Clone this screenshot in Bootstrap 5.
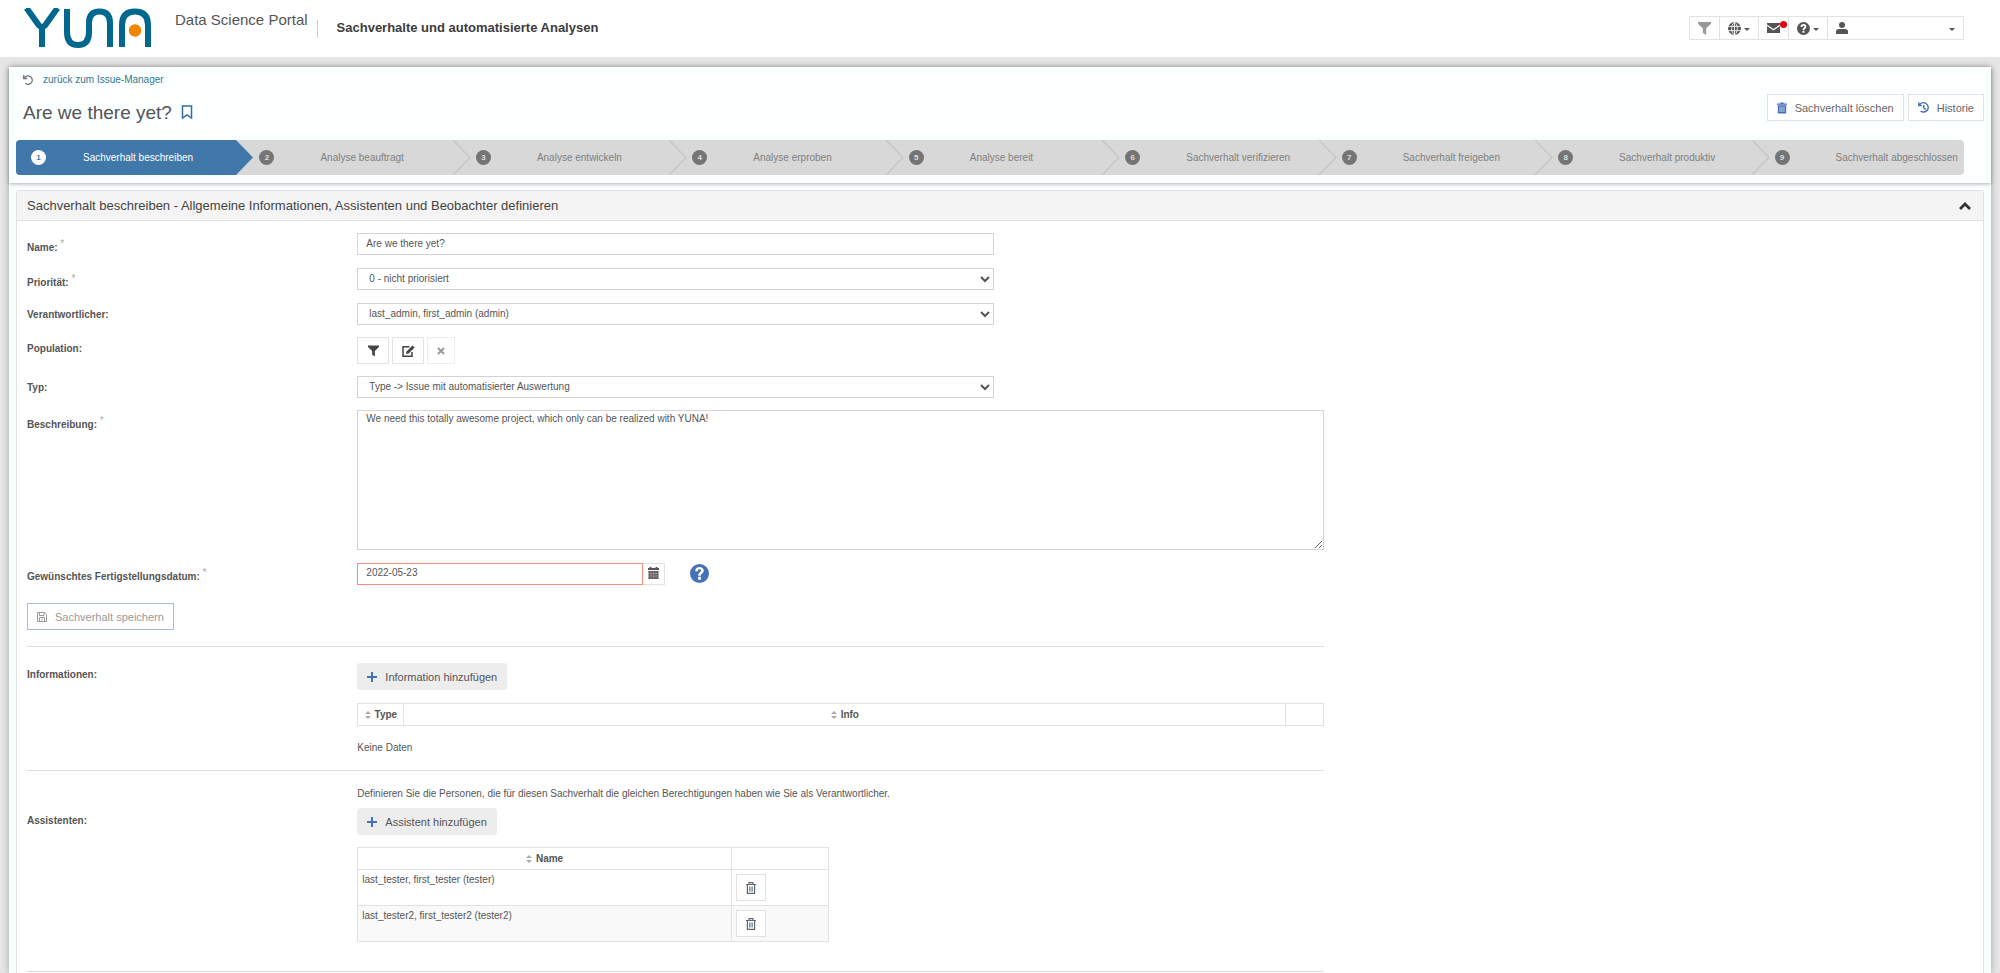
<!DOCTYPE html>
<html lang="de">
<head>
<meta charset="utf-8">
<meta name="viewport" content="width=device-width, initial-scale=1">
<title>YUNA – Sachverhalte und automatisierte Analysen</title>
<link href="https://cdn.jsdelivr.net/npm/bootstrap@5.3.0/dist/css/bootstrap.min.css" rel="stylesheet">
<style>
body { font-family: "Liberation Sans", Arial, sans-serif; font-size: 10px; line-height: 16px; color: #555; background: #e6e6e6; }
button, input, select, textarea { font-family: inherit; }
svg { display: block; flex: none; }
.ico { fill: currentColor; }
.blue { color: #4671b8; }

/* top bar */
.topbar { height: 57px; background: #fff; padding: 8px 36px 0 24px; }
.brand-sub { font-size: 15px; line-height: 24px; margin: 0 0 0 24px; }
.topbar .divider { width: 1px; height: 18px; background: #ccc; margin: 12px 0 0 9px; }
.page-name { font-size: 13px; line-height: 20px; font-weight: 700; color: #3c3c3c; margin: 10px 0 0 19px; }
.tools { margin-top: 8px; }
.tools .btn { height: 24px; border: 1px solid #e2e2e2; border-radius: 0; padding: 0 8px; color: #555; display: flex; align-items: center; gap: 3px; background: #fff; position: relative; }
.tools .btn + .btn { margin-left: -1px; }
.tools .btn.idle { color: #999; }
.tools .account { width: 137px; }
.caret { border: 3px solid transparent; border-top-color: currentColor; border-bottom: 0; width: 0; margin-top: 3px; }
.dot { position: absolute; top: 4px; right: 1px; width: 7px; height: 7px; border-radius: 50%; background: #e2000f; }

/* issue head */
.shell { margin: 10px 9px 0; background: #fbffff; box-shadow: 0 0 7px rgba(0,0,0,.3); }
.headpart { padding: 5px 7px 8px; box-shadow: 0 1px 4px rgba(0,0,0,.3); }
.backlink { color: #34788f; text-decoration: none; padding-left: 7px; gap: 10px; }
.titlebar { padding: 4px 0 0 7px; }
.issue-title { font-size: 19px; line-height: 24px; font-weight: 400; margin: 7px 0 0; color: #555; }
.bookmark { margin: 11px 0 0 9px; }
.btn-line, .btn-flat { font-size: 11px; line-height: 16px; height: 27px; padding: 0 9px; border: 1px solid #e2e2e2; border-radius: 0; background: #fff; color: #666; display: inline-flex; align-items: center; gap: 8px; white-space: nowrap; }
.btn-flat { background: #ededed; border-color: #ededed; border-radius: 3px; color: #555; }
.steps { list-style: none; margin: 15px 20px 0 0; padding: 0; display: grid; grid-template-columns: repeat(9, 1fr); height: 35px; background: #d8d8d8; border-radius: 4px; overflow: hidden; color: #808080; }
.steps li { position: relative; display: flex; align-items: center; padding-left: 27px; white-space: nowrap; }
.steps .num { width: 15px; height: 15px; border-radius: 50%; background: #757575; color: #ddd; font-size: 8px; line-height: 15px; font-weight: 700; text-align: center; margin-right: 46px; }
.steps li:first-child { padding-left: 15px; background: #4078aa; color: #fff; }
.steps li:first-child .num { background: #fff; color: #4078aa; margin-right: 37px; }
.steps svg { position: absolute; left: 100%; top: 0; z-index: 1; }

/* panel and form */
.panel { margin: 7px 7px 0; border: 1px solid #e2e2e2; border-bottom: 0; border-radius: 3px 3px 0 0; background: #fff; }
.panel-top { height: 30px; background: #f4f4f4; border-bottom: 1px solid #e2e2e2; padding: 0 12px 0 10px; }
.panel-top h2 { font-size: 13px; font-weight: 400; margin: 0; color: #444; }
.panel-top button { color: #333; }
.panel-main { padding: 12px 10px 0; }
form > .row { margin-bottom: 12px; }
.field-label { font-weight: 700; padding-top: 4px; }
.field-label.req { padding-top: 7px; }
.req sup { font-size: 10px; font-weight: 400; color: #aaa; top: -4px; line-height: 0; }
.field { padding-left: 6px; }
.box { display: block; height: 22px; border: 1px solid #d4d4d4; border-radius: 0; background: #fff; color: #555; font-size: 10px; line-height: 16px; padding: 0 8px 2px; }
.half { width: calc(66.6667% - 8px); }
select.box { padding-left: 7px; padding-right: 0; }
textarea.box { height: 140px; width: 100%; padding: 0 8px; }
.datebox { width: calc(33.3333% - 15px); margin-right: 25px; }
.datebox .box { flex: 1; border-color: #f58b78; min-width: 0; }
.datebox button { width: 22px; height: 22px; border: 1px solid #e2e2e2; border-left: 0; background: #fff; padding: 3px 0 0; display: flex; justify-content: center; color: #555; }
.tool-row { gap: 3px; }
.sq { height: 27px; border: 1px solid #e2e2e2; background: #fff; padding: 0; width: 32px; display: flex; align-items: center; justify-content: center; color: #444; }
.sq.off { width: 28px; color: #999; border-color: #ededed; }
.btn-save { display: flex; margin: 18px 0 16px; border-color: #a9bcdf; color: #999; }
.rule { border: 0; border-top: 1px solid #dcdcdc; opacity: 1; margin: 0; }

/* tables */
.grid-table { border-collapse: collapse; color: #555; }
.grid-table th, .grid-table td { border: 1px solid #e2e2e2; }
.grid-table th { height: 22px; text-align: center; padding: 0 4px; white-space: nowrap; }
.grid-table td { height: 36px; vertical-align: top; padding: 2px 4px; }
.grid-table tbody tr:nth-child(2) td { background: #f9f9f9; }
.grid-table td .sq { margin-top: 2px; color: #666; width: 30px; }
.sorter { display: inline-block; vertical-align: -1px; margin-right: 4px; color: #aaa; }
.block-info { padding-top: 16px; }
.block-info .grid-table { margin-top: 13px; }
.c-type { width: 46px; }
.c-tail { width: 38px; }
.no-data { margin: 14px 0 2px; }
.block-people { padding-top: 15px; }
.block-people .field-label { padding-top: 27px; }
.intro { margin: 0 0 6px; }
.people { width: calc(50% - 12px); margin: 12px 0 17px; }
.c-act { width: 97px; }
</style>
</head>
<body class="d-flex flex-column min-vh-100">
<svg class="d-none">
  <symbol id="i-filter" viewBox="0 0 12 12"><path d="M0 0H12V1.500L7.500 6V12L4.500 10V6L0 1.500Z"/></symbol>
  <symbol id="i-help" viewBox="0 0 20 20"><path fill-rule="evenodd" d="M10 0A10 10 0 1 1 10 20A10 10 0 0 1 10 0ZM8.500 13.500V16.500H11.500V13.500ZM5.500 7.500H8.300C8.300 6 9 5.600 10 5.600C11 5.600 11.600 6.200 11.600 7C11.600 8.600 8.600 8.700 8.600 12.300H11.300C11.300 10.300 14.500 9.800 14.500 6.900C14.500 4.600 12.500 3.200 10 3.200C7.300 3.200 5.500 4.700 5.500 7.500Z"/></symbol>
  <symbol id="i-trash" viewBox="0 0 12 13"><path d="M4 0H8V1.200H12V2.600H0V1.200H4Z"/><path fill-rule="evenodd" d="M1 3.200H11V13H1ZM3.200 4.800V11.200H4V4.800ZM5.600 4.800V11.200H6.400V4.800ZM8 4.800V11.200H8.800V4.800Z"/></symbol>
  <symbol id="i-bin" viewBox="0 0 10 12"><path fill="none" stroke="currentColor" stroke-width="1.200" d="M0 2.500H10M3 2.500V.7H7V2.500M1.400 2.500V11.300H8.600V2.500"/><path stroke="#5b7f9f" stroke-width=".9" d="M3.600 4.500V9.500M5 4.500V9.500M6.400 4.500V9.500"/></symbol>
  <symbol id="i-plus" viewBox="0 0 10 10"><path d="M4 0H6V4H10V6H6V10H4V6H0V4H4Z"/></symbol>
  <symbol id="i-sort" viewBox="0 0 6 8"><path d="M3 0 6 3H0ZM3 8 0 5H6Z"/></symbol>
  <symbol id="i-chev" viewBox="0 0 22 35"><path d="M4 0 21 17.500 4 35" fill="none" stroke="#c4c4c4" stroke-width="1.200"/></symbol>
</svg>

<header class="topbar d-flex align-items-start">
  <a href="#" aria-label="YUNA"><svg width="127" height="40" viewBox="0 0 127 40" fill="none" stroke="#00678f" stroke-width="6"><path d="M2.500 0 15 17.500Q18 20.500 21 17.500L33.500 0M18 19V39M43 1V24Q43 37 54 37T65 24V15Q65 3.500 75.500 3.500T86 15V39M98 39V17Q98 3.500 111 3.500T124 17V39"/><circle cx="111" cy="22.500" r="6.200" fill="#f28500" stroke="none"/></svg></a>
  <div class="brand-sub text-nowrap">Data Science Portal</div>
  <span class="divider"></span>
  <h1 class="page-name text-nowrap">Sachverhalte und automatisierte Analysen</h1>
  <div class="tools d-flex ms-auto">
    <button class="btn idle" type="button" aria-label="Filter"><svg class="ico" width="13" height="13"><use href="#i-filter"/></svg></button>
    <button class="btn" type="button" aria-label="Sprache"><svg width="13" height="13" viewBox="0 0 12 12"><circle cx="6" cy="6" r="6" fill="#555"/><path d="M0 4H12M0 8H12M6 0V12M6 0C2.500 3 2.500 9 6 12C9.500 9 9.500 3 6 0" fill="none" stroke="#fff" stroke-width=".8"/></svg><span class="caret"></span></button>
    <button class="btn" type="button" aria-label="Nachrichten"><svg class="ico" width="13" height="10" viewBox="0 0 13 10"><path d="M0 0H13V1.500L6.500 6 0 1.500ZM0 3 6.500 7.400 13 3V10H0Z"/></svg><span class="dot"></span></button>
    <button class="btn" type="button" aria-label="Hilfe"><svg class="ico" width="13" height="13"><use href="#i-help"/></svg><span class="caret"></span></button>
    <button class="btn account" type="button" aria-label="Benutzer"><svg class="ico me-auto" width="12" height="12" viewBox="0 0 12 12"><circle cx="6" cy="3" r="3"/><path d="M0 12V9.500Q0 7 3 7H9Q12 7 12 9.500V12Z"/></svg><span class="caret"></span></button>
  </div>
</header>

<main class="shell flex-grow-1 d-flex flex-column">
  <section class="headpart">
    <a href="#" class="backlink d-inline-flex align-items-center"><svg width="10" height="10" viewBox="0 0 10 10" fill="none" stroke="#777" stroke-width="1.300"><path d="M.7 0V3.500H4.200M.9 3.300C2 1 5 .4 7 1.400C9.500 2.700 9.900 5.800 8.300 7.700C6.800 9.400 4.200 9.700 2.300 8.300"/></svg>zurück zum Issue-Manager</a>
    <div class="titlebar d-flex align-items-start">
      <h2 class="issue-title text-nowrap">Are we there yet?</h2>
      <svg class="bookmark" width="12" height="14" viewBox="0 0 12 14" fill="none" stroke="#34709b" stroke-width="1.500"><path d="M1.500 1H10.500V13L6 9.800 1.500 13Z"/></svg>
      <div class="d-flex ms-auto gap-1">
        <button class="btn-line" type="button"><svg class="ico blue" width="10" height="12"><use href="#i-trash"/></svg>Sachverhalt löschen</button>
        <button class="btn-line" type="button"><svg class="blue" width="11" height="11" viewBox="0 0 11 11" fill="none" stroke="currentColor" stroke-width="1.400"><path d="M.8 .5V3.500H3.800M1.200 3.300C2.500 .9 5.400 .2 7.700 1.300C10.200 2.600 10.900 5.700 9.400 8C7.900 10.200 4.800 10.700 2.600 9.200M5.800 3V6L7.800 7.300"/></svg>Historie</button>
      </div>
    </div>
    <ol class="steps">
      <li><span class="num">1</span>Sachverhalt beschreiben<svg width="22" height="35" viewBox="0 0 22 35"><path d="M-1 0H4L21 17.500 4 35H-1Z" fill="#4078aa"/></svg></li>
      <li><span class="num">2</span>Analyse beauftragt<svg width="22" height="35"><use href="#i-chev"/></svg></li>
      <li><span class="num">3</span>Analyse entwickeln<svg width="22" height="35"><use href="#i-chev"/></svg></li>
      <li><span class="num">4</span>Analyse erproben<svg width="22" height="35"><use href="#i-chev"/></svg></li>
      <li><span class="num">5</span>Analyse bereit<svg width="22" height="35"><use href="#i-chev"/></svg></li>
      <li><span class="num">6</span>Sachverhalt verifizieren<svg width="22" height="35"><use href="#i-chev"/></svg></li>
      <li><span class="num">7</span>Sachverhalt freigeben<svg width="22" height="35"><use href="#i-chev"/></svg></li>
      <li><span class="num">8</span>Sachverhalt produktiv<svg width="22" height="35"><use href="#i-chev"/></svg></li>
      <li><span class="num">9</span>Sachverhalt abgeschlossen</li>
    </ol>
  </section>

  <section class="panel flex-grow-1">
    <div class="panel-top d-flex align-items-center justify-content-between">
      <h2>Sachverhalt beschreiben - Allgemeine Informationen, Assistenten und Beobachter definieren</h2>
      <button type="button" class="border-0 bg-transparent p-0" aria-label="Einklappen"><svg width="12" height="8" viewBox="0 0 12 8" fill="none" stroke="currentColor" stroke-width="2.800"><path d="M1 7 6 2 11 7"/></svg></button>
    </div>
    <div class="panel-main">
      <form class="col-8">
        <div class="row g-0">
          <label class="col-3 field-label req" for="f-name">Name: <sup>*</sup></label>
          <div class="col-9 field"><input id="f-name" class="box half" type="text" value="Are we there yet?"></div>
        </div>
        <div class="row g-0">
          <label class="col-3 field-label req" for="f-prio">Priorität: <sup>*</sup></label>
          <div class="col-9 field"><select id="f-prio" class="box half"><option>0 - nicht priorisiert</option></select></div>
        </div>
        <div class="row g-0">
          <label class="col-3 field-label" for="f-resp">Verantwortlicher:</label>
          <div class="col-9 field"><select id="f-resp" class="box half"><option>last_admin, first_admin (admin)</option></select></div>
        </div>
        <div class="row g-0">
          <span class="col-3 field-label">Population:</span>
          <div class="col-9 field d-flex tool-row">
            <button class="sq" type="button" aria-label="Filtern"><svg class="ico" width="11" height="12"><use href="#i-filter"/></svg></button>
            <button class="sq" type="button" aria-label="Bearbeiten"><svg width="13" height="12" viewBox="0 0 13 12" fill="none" stroke="currentColor" stroke-width="1.500"><path d="M7.500 1.800H1V11.200H10V7"/><path d="M4 9 4.500 6.400 10.500 .4 12.600 2.500 6.600 8.500Z" fill="currentColor" stroke="none"/></svg></button>
            <button class="sq off" type="button" aria-label="Entfernen" disabled><svg width="8" height="8" viewBox="0 0 8 8" stroke="currentColor" stroke-width="2"><path d="M1 1 7 7M7 1 1 7"/></svg></button>
          </div>
        </div>
        <div class="row g-0">
          <label class="col-3 field-label" for="f-type">Typ:</label>
          <div class="col-9 field"><select id="f-type" class="box half"><option>Type -&gt; Issue mit automatisierter Auswertung</option></select></div>
        </div>
        <div class="row g-0">
          <label class="col-3 field-label req" for="f-desc">Beschreibung: <sup>*</sup></label>
          <div class="col-9 field"><textarea id="f-desc" class="box">We need this totally awesome project, which only can be realized with YUNA!</textarea></div>
        </div>
        <div class="row g-0">
          <label class="col-3 field-label req" for="f-date">Gewünschtes Fertigstellungsdatum: <sup>*</sup></label>
          <div class="col-9 field d-flex align-items-center">
            <div class="datebox d-flex"><input id="f-date" class="box" type="text" value="2022-05-23"><button type="button" aria-label="Kalender"><svg class="ico" width="11" height="12" viewBox="0 0 11 12"><path d="M1.500 0H3.500V1H7.500V0H9.500V1H11V3H0V1H1.500Z"/><path d="M.5 4H10.500V12H.5Z"/><path d="M.5 6.500H10.500M.5 9H10.500M3 4V12M5.500 4V12M8 4V12" stroke="#fff" stroke-width=".3"/></svg></button></div>
            <svg class="ico blue" width="19" height="19"><use href="#i-help"/></svg>
          </div>
        </div>
        <button class="btn-line btn-save" type="button" disabled><svg width="10" height="10" viewBox="0 0 10 10" fill="none" stroke="currentColor"><path d="M.5 .5H7.500L9.500 2.500V9.500H.5ZM2.500 .5V3.500H7V.5M2.500 9.500V5.500H7.500V9.500M5 6.500V8.500"/></svg>Sachverhalt speichern</button>

        <hr class="rule">
        <div class="row g-0 block-info">
          <span class="col-3 field-label">Informationen:</span>
          <div class="col-9 field">
            <button class="btn-flat" type="button"><svg class="ico blue" width="10" height="10"><use href="#i-plus"/></svg>Information hinzufügen</button>
            <table class="grid-table w-100">
              <thead><tr><th class="c-type"><svg class="ico sorter" width="6" height="8"><use href="#i-sort"/></svg>Type</th><th><svg class="ico sorter" width="6" height="8"><use href="#i-sort"/></svg>Info</th><th class="c-tail"></th></tr></thead>
            </table>
            <p class="no-data">Keine Daten</p>
          </div>
        </div>

        <hr class="rule">
        <div class="row g-0 block-people">
          <span class="col-3 field-label">Assistenten:</span>
          <div class="col-9 field">
            <p class="intro">Definieren Sie die Personen, die für diesen Sachverhalt die gleichen Berechtigungen haben wie Sie als Verantwortlicher.</p>
            <button class="btn-flat" type="button"><svg class="ico blue" width="10" height="10"><use href="#i-plus"/></svg>Assistent hinzufügen</button>
            <table class="grid-table people">
              <thead><tr><th><svg class="ico sorter" width="6" height="8"><use href="#i-sort"/></svg>Name</th><th class="c-act"></th></tr></thead>
              <tbody>
                <tr><td>last_tester, first_tester (tester)</td><td><button class="sq" type="button" aria-label="Löschen"><svg class="ico" width="10" height="12"><use href="#i-bin"/></svg></button></td></tr>
                <tr><td>last_tester2, first_tester2 (tester2)</td><td><button class="sq" type="button" aria-label="Löschen"><svg class="ico" width="10" height="12"><use href="#i-bin"/></svg></button></td></tr>
              </tbody>
            </table>
          </div>
        </div>
        <hr class="rule">
      </form>
    </div>
  </section>
</main>
<script src="https://cdn.jsdelivr.net/npm/bootstrap@5.3.0/dist/js/bootstrap.bundle.min.js"></script>
</body>
</html>
